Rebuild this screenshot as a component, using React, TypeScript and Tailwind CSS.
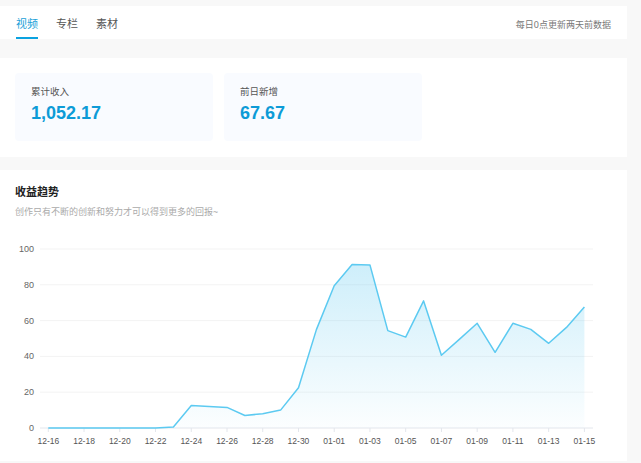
import React from "react";

const font = { fontFamily: '"Noto Sans", "Noto Sans CJK SC", sans-serif' };

const values = [
  0, 0, 0, 0, 0, 0, 0, 0.5, 12.5, 12, 11.5, 7, 8, 10, 22.5, 55,
  79.5, 91.4, 91, 54.4, 50.8, 71, 40.6, 49.5, 58.5, 42.3, 58.5, 55.1, 47.3, 56.2, 67.67,
];

const dates = [
  ...Array.from({ length: 16 }, (_, i) => `12-${16 + i}`),
  ...Array.from({ length: 15 }, (_, i) => `01-${String(i + 1).padStart(2, "0")}`),
];

const px = (i: number) => 48.3 + 17.87 * i;
const py = (v: number) => 428 - 1.79 * v;

const Chart: React.FC = () => {
  const line = values.map((v, i) => `${i === 0 ? "M" : "L"}${px(i).toFixed(1)},${py(v).toFixed(1)}`).join(" ");
  const area = `${line} L${px(30).toFixed(1)},428 L${px(0).toFixed(1)},428 Z`;
  return (
    <svg width={627} height={241} viewBox="0 220 627 241" className="block">
      <defs>
        <linearGradient id="fill" x1="0" y1="0" x2="0" y2="1">
          <stop offset="0%" stopColor="#5cc8f0" stopOpacity={0.3} />
          <stop offset="100%" stopColor="#5cc8f0" stopOpacity={0.02} />
        </linearGradient>
      </defs>
      {[0, 20, 40, 60, 80, 100].map((t) => (
        <g key={t}>
          <line x1={40} x2={593} y1={py(t)} y2={py(t)} stroke={t === 0 ? "#e3e6ec" : "#f3f3f3"} strokeWidth={1} />
          <text x={34} y={py(t) + 3} textAnchor="end" fontSize={9} fill="#666" fontFamily="Liberation Sans, sans-serif">
            {t}
          </text>
        </g>
      ))}
      {dates.map((d, i) =>
        i % 2 === 0 ? (
          <g key={d}>
            <line x1={px(i)} x2={px(i)} y1={428} y2={432} stroke="#e3e6ec" />
            <text x={px(i)} y={444} textAnchor="middle" fontSize={8.5} fill="#555" fontFamily="Liberation Sans, sans-serif">
              {d}
            </text>
          </g>
        ) : null
      )}
      <path d={area} fill="url(#fill)" />
      <path d={line} fill="none" stroke="#5ccaf1" strokeWidth={1.5} strokeLinejoin="round" />
    </svg>
  );
};

const StatCard: React.FC<{ label: string; value: string }> = ({ label, value }) => (
  <div className="w-[198px] h-[68px] rounded-[4px] bg-[#f9fbff] pl-[16px] pt-[12px]">
    <div className="text-[9.5px] leading-[14px] text-[#555]">{label}</div>
    <div className="mt-[3px] text-[18px] leading-[22px] font-bold text-[#0d9bd7] font-['Liberation_Sans',sans-serif]">
      {value}
    </div>
  </div>
);

export default function App() {
  const tabs = ["视频", "专栏", "素材"];
  return (
    <div className="w-[641px] h-[463px] bg-[#f8f8f8] overflow-hidden pt-[6px]" style={font}>
      <div className="w-[627px] h-[33px] bg-white flex items-stretch justify-between pl-[16px] pr-[16px]">
        <div className="flex gap-[18px]">
          {tabs.map((t, i) => (
            <div
              key={t}
              className={`flex items-center pt-[4px] border-b-2 text-[11px] leading-[16px] ${
                i === 0 ? "border-[#0ba2e0] text-[#1a9fd8]" : "border-transparent text-[#555]"
              }`}
            >
              {t}
            </div>
          ))}
        </div>
        <div className="flex items-center pt-[4px] text-[9px] text-[#777]">每日0点更新两天前数据</div>
      </div>

      <div className="mt-[19px] w-[627px] h-[99px] bg-white flex gap-[11px] p-[15px]">
        <StatCard label="累计收入" value="1,052.17" />
        <StatCard label="前日新增" value="67.67" />
      </div>

      <div className="mt-[13px] w-[627px] h-[291px] bg-white pt-[14px]">
        <div className="px-[15px] text-[11px] leading-[16px] font-bold text-[#222]">收益趋势</div>
        <div className="mt-[4px] px-[15px] text-[9px] leading-[16px] text-[#aaa]">
          创作只有不断的创新和努力才可以得到更多的回报~
        </div>
        <Chart />
      </div>
    </div>
  );
}
